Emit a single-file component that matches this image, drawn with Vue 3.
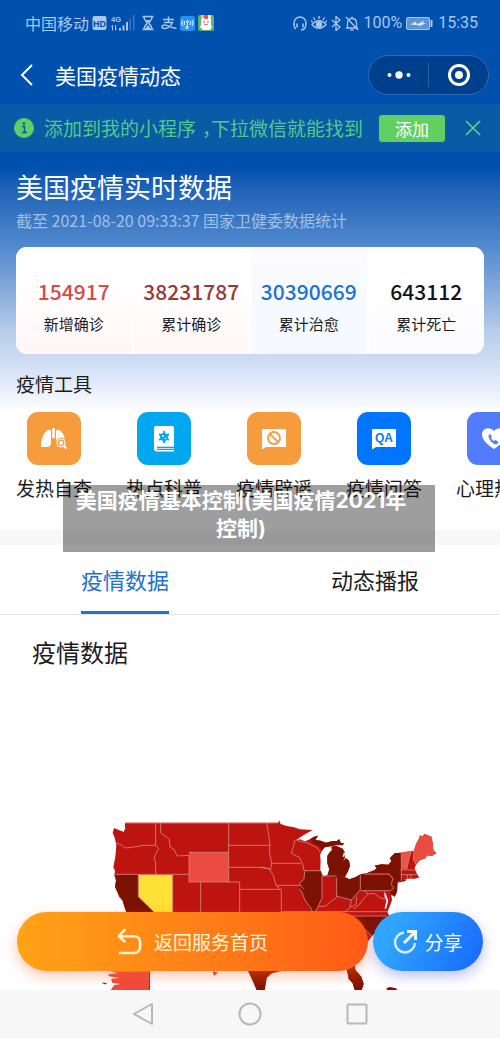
<script setup>
import { ref } from 'vue'

const stats = [
  { value: '154917', label: '新增确诊', tone: 'new' },
  { value: '38231787', label: '累计确诊', tone: 'total' },
  { value: '30390669', label: '累计治愈', tone: 'cured' },
  { value: '643112', label: '累计死亡', tone: 'dead' },
]

const tools = [
  { label: '发热自查', icon: 'lungs', tone: 'orange' },
  { label: '热点科普', icon: 'book', tone: 'sky' },
  { label: '疫情辟谣', icon: 'rumor', tone: 'orange' },
  { label: '疫情问答', icon: 'qa', tone: 'blue' },
  { label: '心理热线', icon: 'heart', tone: 'indigo' },
]

const tabs = ['疫情数据', '动态播报']
const activeTab = ref(0)
const tipOpen = ref(true)
</script>

<template>
  <div class="page">
    <div class="hero">
      <div class="status">
        <div class="status-group">
          <span>中国移动</span>
          <svg class="ic-hd" width="15" height="14" viewBox="0 0 15 14">
            <rect x="0.5" width="14" height="14" rx="2" fill="#a9c6ec" />
            <text x="7.5" y="10.5" text-anchor="middle" font-size="9" font-weight="700" fill="#0450ac">HD</text>
          </svg>
          <svg width="24" height="16" viewBox="0 0 24 16" fill="#a9c6ec">
            <text x="0" y="7" font-size="7.5" font-weight="700">4G</text>
            <path d="M1.5 10l-1.5 2h1v3.5h1V10zM4 10h1v3.500h1l-1.500 2-.5-.5zM8 13h2v2.500H8zM11.500 10.500h2v5h-2zM15 7h2v8.500h-2z" />
            <path d="M18.500 3.500h1.500v12h-1.500zM22 0h1.500v15.500H22z" opacity=".35" />
          </svg>
          <svg class="ic-glass" width="12" height="16" viewBox="0 0 12 16" fill="none" stroke="#a9c6ec" stroke-width="1.500">
            <path d="M0.500 1.500h11M.5 14.500h11M2 2c0 4 3 4 3 6s-3 2-3 6M10 2c0 4-3 4-3 6s3 2 3 6" />
            <path d="M3.500 5h5L6 8zM3 14l3-4 3 4z" fill="#a9c6ec" stroke="none" />
          </svg>
          <svg width="16" height="14" viewBox="0 0 16 14" fill="none" stroke="#a9c6ec" stroke-width="1.500">
            <path d="M2 3.500h11M7.500 0.500V6M3 6.500h8.500C10 10.500 6 12.500 3 12.500c-3 0-2.500-3.500.5-3.500 4 0 6 3 12 3.500" />
          </svg>
          <svg width="15" height="15" viewBox="0 0 15 15" fill="none" stroke="#fff">
            <rect width="15" height="15" rx="3" fill="#2494f4" stroke="none" />
            <path d="M3 4c-1.500 2-1.500 4 0 6M5 5c-1 1.500-1 3 0 4M12 4c1.500 2 1.500 4 0 6M10 5c1 1.500 1 3 0 4M7.500 6v5" />
            <circle cx="7.500" cy="5.500" r="1" /><circle cx="7" cy="11.500" r="1.200" />
          </svg>
          <svg width="16" height="16" viewBox="0 0 16 16">
            <rect width="16" height="16" rx="2" fill="#58b67b" />
            <path d="M3 0h3v5H3z" fill="#f5c34c" /><path d="M6 0h4v4H6z" fill="#e94c4a" /><path d="M10 0h3v5h-3z" fill="#f4e9c9" />
            <path d="M3 5l2-2 2 1h2l2-1 2 2v5l1 2-2 3H5l-3-3 1-2z" fill="#fff" />
            <circle cx="6" cy="7" r=".7" fill="#345" /><circle cx="10" cy="7" r=".7" fill="#345" />
            <path d="M6 9q2 2 4 0" fill="none" stroke="#e55" />
          </svg>
        </div>
        <div class="status-group right">
          <svg width="14" height="15" viewBox="0 0 14 15" fill="none" stroke="#a9c6ec" stroke-width="1.500">
            <path d="M3 12.500H2.500C1.500 12 1 9 1 7a6 6 0 0 1 12 0c0 4-1 7-5 7M4 7.500v4M10 7.500v4" />
          </svg>
          <svg width="16" height="14" viewBox="0 0 16 14" fill="none" stroke="#a9c6ec" stroke-width="1.400">
            <path d="M1 8.500c4-5 10-5 14 0-4 5-10 5-14 0zM8 3V0M4 4L2.500 1.500M12 4l1.500-2.500M1.500 6L0 4.500M14.500 6L16 4.500" />
            <circle cx="8" cy="8.500" r="2.500" fill="#a9c6ec" />
          </svg>
          <svg width="10" height="15" viewBox="0 0 10 15" fill="none" stroke="#a9c6ec" stroke-width="1.300">
            <path d="M1 4l8 7-4 3.500V.5L9 4l-8 7" />
          </svg>
          <svg width="14" height="15" viewBox="0 0 14 15" fill="none" stroke="#a9c6ec" stroke-width="1.300">
            <path d="M1 12h12M2.500 12V7c0-3 2-4.500 4.500-4.500S11.500 4 11.500 7v5M7 2.500V.5M5.500 14h3M1 1l12 13" />
          </svg>
          <span>100%</span>
          <svg class="ic-batt" width="28" height="13" viewBox="0 0 28 13">
            <rect x=".5" y=".5" width="23" height="12" rx="1.500" fill="#5f92d3" stroke="#a9c6ec" />
            <path d="M25.500 3v7" stroke="#a9c6ec" stroke-width="2" />
            <path d="M4 7.500l6-3v2h3l5-3-1 2.500h3l-7 3.500V8H9z" fill="#d9e8fa" />
          </svg>
          <span>15:35</span>
        </div>
      </div>

      <header class="nav">
        <button class="back" type="button" aria-label="返回">
          <svg width="14" height="22" viewBox="0 0 14 22" fill="none" stroke="#fff" stroke-width="2">
            <path d="M12 1L2 11l10 10" />
          </svg>
        </button>
        <h1>美国疫情动态</h1>
        <div class="capsule">
          <button type="button" aria-label="更多">
            <svg width="24" height="8" viewBox="0 0 24 8" fill="#fff">
              <circle cx="2.500" cy="4" r="2" /><circle cx="12" cy="4" r="3.700" /><circle cx="21.500" cy="4" r="2" />
            </svg>
          </button>
          <button type="button" aria-label="关闭">
            <svg width="22" height="22" viewBox="0 0 22 22">
              <circle cx="11" cy="11" r="9.500" fill="none" stroke="#fff" stroke-width="3" />
              <circle cx="11" cy="11" r="4" fill="#fff" />
            </svg>
          </button>
        </div>
      </header>

      <div v-if="tipOpen" class="tip">
        <svg width="20" height="20" viewBox="0 0 20 20">
          <circle cx="10" cy="10" r="10" fill="#5fcf62" />
          <path d="M8 8.500h2.500v6M8 14.500h5" fill="none" stroke="#0858a4" stroke-width="1.500" />
          <circle cx="10" cy="5.500" r="1.200" fill="#0858a4" />
        </svg>
        <p>添加到我的小程序<span class="comma">，</span>下拉微信就能找到</p>
        <button class="add" type="button">添加</button>
        <button class="close" type="button" aria-label="关闭提示" @click="tipOpen = false">
          <svg width="16" height="16" viewBox="0 0 16 16" stroke="#5fcf8a" stroke-width="1.600">
            <path d="M1 1l14 14M15 1L1 15" />
          </svg>
        </button>
      </div>

      <section class="summary">
        <h2>美国疫情实时数据</h2>
        <p class="asof">截至 2021-08-20 09:33:37 国家卫健委数据统计</p>
        <dl class="card">
          <div v-for="s in stats" :key="s.label" class="cell" :class="s.tone">
            <dd>{{ s.value }}</dd>
            <dt>{{ s.label }}</dt>
          </div>
        </dl>
      </section>

      <section class="tools">
        <h3>疫情工具</h3>
        <nav class="tool-row">
          <a v-for="t in tools" :key="t.label" href="#" class="tool">
            <span class="tile" :class="t.tone">
              <svg v-if="t.icon === 'lungs'" width="28" height="24" viewBox="0 0 28 24">
                <path d="M11 4.500v10c0 3.500-1 5.500-4 5.500H2.500C1 20 1 19 1 17.500 1.500 10 5 4 8 3c2-.5 3 0 3 1.500zM16 5c0-2 1-2.500 3-2 3 1 5 5 6 10v7h-5l-4-3z" fill="#fff" />
                <path d="M13.500 1v10" stroke="#fff" stroke-width="2.500" />
                <circle cx="21" cy="16" r="5" fill="#fff" stroke="#f69c3c" stroke-width="1" />
                <circle cx="21" cy="16" r="2.800" fill="#fff" stroke="#f69c3c" stroke-width="1.300" />
                <path d="M24 19l2.500 2.500" stroke="#fff" stroke-width="2" />
              </svg>
              <svg v-else-if="t.icon === 'book'" width="22" height="26" viewBox="0 0 22 26">
                <path d="M3 0h16a2 2 0 0 1 2 2v21H4v1h17v1.500H4a3 3 0 0 1-3-3V2a2 2 0 0 1 2-2z" fill="#fff" />
                <path d="M4 21.500h17" stroke="#02a7f0" stroke-width="1.600" />
                <circle cx="11" cy="11" r="4" fill="#02a7f0" />
                <path d="M11 5v12M6 8l10 6M16 8L6 14" stroke="#02a7f0" stroke-width="1.800" />
                <circle cx="10" cy="10" r="1" fill="#fff" /><circle cx="12.500" cy="12.500" r=".8" fill="#fff" />
              </svg>
              <svg v-else-if="t.icon === 'rumor'" width="26" height="22" viewBox="0 0 26 22">
                <path d="M1 1h24v18H5l-4 2.500z" fill="#fff" />
                <circle cx="13" cy="10" r="6" fill="none" stroke="#f69c3c" stroke-width="1.800" />
                <path d="M9 6l8 8" stroke="#f69c3c" stroke-width="1.800" />
              </svg>
              <svg v-else-if="t.icon === 'qa'" width="26" height="22" viewBox="0 0 26 22">
                <path d="M1 1h24v18H5l-4 2.500z" fill="#fff" />
                <text x="13" y="14" text-anchor="middle" font-size="12" font-weight="700" fill="#0878fc">QA</text>
              </svg>
              <svg v-else width="26" height="24" viewBox="0 0 26 24">
                <path d="M13 22C6 17 1 13 1 7c0-6 8-8 12-3 4-5 12-3 12 3 0 6-5 10-12 15z" fill="#fff" />
                <path d="M9 7c-2 1-2 3 0 6 2 3 5 5 7 4l1.500-2-3-2-1.500 1c-2-1-2.500-2-3-3.500l1-1z" fill="#537cfd" />
              </svg>
            </span>
            <span class="tool-label">{{ t.label }}</span>
          </a>
        </nav>
        <div class="caption">美国疫情基本控制(美国疫情2021年<br>控制)</div>
      </section>
    </div>

    <div class="band"></div>

    <div class="tabs" role="tablist">
      <button
        v-for="(t, i) in tabs"
        :key="t"
        type="button"
        role="tab"
        :aria-selected="i === activeTab"
        :class="{ active: i === activeTab }"
        @click="activeTab = i"
      ><span>{{ t }}</span></button>
    </div>

    <main class="data">
      <h2>疫情数据</h2>
      <svg class="map" viewBox="-270 -384 1500 924" role="img" aria-label="美国各州疫情地图">
        <defs>
          <linearGradient id="south" x1="0" y1="480" x2="0" y2="540" gradientUnits="userSpaceOnUse">
            <stop offset="0" stop-color="#a02008" /><stop offset="1" stop-color="#7c1204" />
          </linearGradient>
        </defs>
        <!-- contiguous states -->
        <path fill="#be1410" d="M105 38H565L567 30L572 42L590 48L612 52L630 58L668 60L640 76L622 88L615 92L630 88L645 94L660 88L672 80L684 77L676 90L692 92L708 98L725 94L740 93L748 88L752 98L762 100L758 106L740 105L722 109L704 112L696 122L690 135L692 150L691 180L699 198L712 196L718 178L712 160L712 138L718 128L726 120L724 110L738 107L758 116L765 128L764 144L758 154L768 145L777 152L780 168L774 184L765 200L778 208L796 202L812 193L830 190L854 180L860 174L854 167L874 163L895 164L904 154L900 144L914 130L934 128L972 122L978 102L987 86L990 76L996 80L1004 72L1024 80L1028 98L1030 120L1039 130L1025 138L1012 136L1004 146L990 150L978 164L974 174L978 186L986 200L990 202L974 206L950 206L924 217L922 230L921 245L914 260L904 255L906 270L902 282L892 306L898 318L878 346L858 366L846 378L830 400L792 430L796 480L814 500L821 522L815 540H794L788 520L776 507L777 495L772 480L720 460L640 476L571 484L545 490L530 503L524 540H500L490 516L474 483L420 440L340 440L240 425L180 390L130 340L108 304L103 290L98 272L87 260L82 246L75 230L78 212L73 196L75 182L70 172L76 140L79 106L75 86L68 68L72 54L92 62L102 66L104 54Z" />
        <path fill="#7c1204" d="M76 194H145V260L192 306L220 340H130L108 304L98 272L82 246L75 230L78 212Z" />
        <path fill="#ffe034" d="M145 194H248V340H220L192 306L145 260Z" />
        <path fill="#ea4c42" d="M297 127H416V216H297Z" />
        <g fill="#7c1204">
          <path d="M644 184H692L696 200V264L684 290L676 304L668 304L660 290L648 274L640 262L636 246L628 236L630 220L642 208Z" />
          <path d="M740 203L768 204L778 208L796 202L811 193V238L800 252L784 270L768 266L748 262L740 258Z" />
          <path d="M712 198L718 178L712 160L712 138L718 128L726 120L724 110L738 107L758 116L765 128L764 144L758 154L768 145L777 152L780 168L774 184L765 200L740 203Z" />
          <path d="M660 88L672 80L684 77L676 90L692 92L708 98L725 94L740 93L748 88L752 98L762 100L758 106L740 105L722 109L704 112L696 122L690 112L672 102Z" />
          <path d="M811 193L830 190L854 180L860 174L854 167L874 163L895 164L904 154L900 144L914 130L932 128L934 180L932 214L918 212L912 204L898 192L822 192L822 197L811 197Z" />
          <path d="M811 195H896L908 206L904 224L912 234L902 242H811Z" />
          <path d="M908 206L920 212L922 230L921 245L914 260L900 246L912 234L904 224Z" />
          <path d="M922 218L936 210L952 208L944 214Z" />
          <path d="M782 318H890L878 346L858 366L846 378L824 358L800 338Z" />
        </g>
        <path fill="#e8574c" d="M934 127L965 122L958 142L950 178H936L934 150Z" />
        <path fill="#ea4c42" d="M972 122L978 102L987 86L990 76L996 80L1004 72L1024 80L1028 98L1030 120L1039 130L1025 138L1012 136L1004 146L990 150L978 164L970 148Z" />
        <g fill="url(#south)">
          <path d="M474 480H574L545 490L530 503L524 540H500L490 516Z" />
          <path d="M768 470H794L796 480L814 500L821 522L815 540H794L788 520L776 507Z" />
          <path d="M890 534L900 531L918 535L922 540H890Z" />
        </g>
        <!-- bays and inlets -->
        <path fill="none" stroke="#fff" stroke-width="5" d="M884 250l8 22-6 24M98 44l6 14M764 128l-4 12" />
        <!-- state borders -->
        <g fill="none" stroke="#cf8582" stroke-width="2.500">
          <path d="M105 39H563M79 99L94 104L104 114L126 112L158 106H197V39M197 106L206 116L196 134L192 148L197 156V193M76 193H297M212 39V68L238 88L240 112L250 116L262 138L297 136V216M297 127H416V39M416 127V216M416 106H540M416 172H518L544 178M297 216H449V306M332 216V306M449 238H574M248 194V306M145 194V260L192 306M530 39L536 74L540 106L538 124L545 160M545 160H632M510 172L538 176L550 196L558 226L574 240V306M558 226H632L642 238M615 90L610 110L604 130L628 142L638 162L642 182M545 160L542 176M642 182H692M632 226L628 220L642 208L644 184M622 92L650 98L680 112L690 126M696 198V264L684 290L676 306M696 198H740M740 203V262L724 274L708 288L684 290M740 258L768 266L784 270L800 252L811 238V193M784 270L780 292L764 306M800 260L798 284L780 292M811 242H902M574 305H892M782 318H890M822 242L834 252L818 270L804 288L790 296M834 252L852 250L868 262L890 270M822 192H898L908 206L904 224L912 234L902 242M934 127V214M965 122L958 142L950 178M932 180H980M932 194H980M972 122L970 148L978 164M952 194V206M962 194V206M884 242V264M650 278L642 264L636 246L628 236M668 306L660 290L650 278M782 318L800 338L824 358L846 378" />
        </g>
        <!-- Alaska and Hawaii -->
        <path fill="#ee4b3c" d="M60 484H180V540H62L72 526L90 522L66 518L64 506L88 504L54 498L58 492L84 490Z" />
        <path fill="#6b2b28" d="M34 518h12l6 4-8 1zM178 484h2v56h-2z" />
        <path fill="#dc3a2c" d="M368 484L384 488L376 494L372 498Z" />
      </svg>
      <div class="actions">
        <button class="home" type="button">
          <svg width="25" height="27" viewBox="0 0 26 28" fill="none" stroke="#fff3d6" stroke-width="2.600" stroke-linejoin="round" stroke-linecap="round">
            <path d="M8 2L2 8.500L8 14M2 8.500H18A6 6 0 0 1 24 14.500V20A6 6 0 0 1 18 26H3" />
          </svg>
          返回服务首页
        </button>
        <button class="share" type="button">
          <svg width="24" height="24" viewBox="0 0 24 24" fill="none" stroke="#eef8ff" stroke-width="2.400">
            <path d="M11 2.500A10 10 0 1 0 22 13" opacity=".9" />
            <path d="M11 13L22 2M14 1.500h8.500V10" stroke-width="3" />
          </svg>
          分享
        </button>
      </div>
    </main>

    <footer class="sysnav">
      <button type="button" aria-label="返回键">
        <svg width="22" height="24" viewBox="0 0 22 24"><path d="M20 2v20L2 12z" /></svg>
      </button>
      <button type="button" aria-label="主屏幕">
        <svg width="24" height="24" viewBox="0 0 24 24"><circle cx="12" cy="12" r="10.500" /></svg>
      </button>
      <button type="button" aria-label="最近任务">
        <svg width="22" height="22" viewBox="0 0 22 22"><rect x="1.500" y="1.500" width="19" height="19" rx="1" /></svg>
      </button>
    </footer>
  </div>
</template>

<style>
body {
  margin: 0;
}
</style>

<style scoped>
.page {
  display: flex;
  flex-direction: column;
  min-height: 100vh;
  overflow: hidden;
  background: #fff;
  color: #1c1c1e;
  font-family: "Noto Sans CJK SC", "Noto Sans", sans-serif;
}
h1, h2, h3, p, dl, dd, dt {
  margin: 0;
  font-weight: 400;
}
button {
  margin: 0;
  padding: 0;
  border: 0;
  background: none;
  color: inherit;
  font: inherit;
}
a {
  color: inherit;
  text-decoration: none;
}
svg {
  display: block;
  flex: none;
}
svg text {
  font-family: "Liberation Sans", sans-serif;
}
.hero {
  background: linear-gradient(#0050ad 0, #0050ad 168px, #2063b8 190px, #5189cd 245px, #85aadc 290px, #bacfeb 335px, #d6e2f6 370px, #edf2fc 394px, #fff 412px);
}
.status {
  display: flex;
  justify-content: space-between;
  align-items: center;
  height: 46px;
  padding: 0 22px 0 25px;
  color: #a9c6ec;
  font-size: 16px;
  line-height: 22px;
}
.status-group {
  display: flex;
  align-items: center;
  gap: 3px;
}
.status-group.right {
  gap: 4px;
  font-family: Roboto, sans-serif;
}
.ic-hd {
  margin-right: 1px;
}
.ic-glass {
  margin: 0 4px;
}
.nav {
  display: flex;
  align-items: center;
  height: 58px;
  padding: 0 11px 0 20px;
  color: #fff;
}
.back {
  width: 35px;
}
h1 {
  flex: 1;
  font-size: 21px;
  line-height: 32px;
}
.capsule {
  display: flex;
  align-items: center;
  box-sizing: border-box;
  width: 121px;
  height: 40px;
  border: 1px solid #2f68b4;
  border-radius: 20px;
  background: #003f8b;
}
.capsule button {
  flex: 1;
  display: flex;
  justify-content: center;
  align-items: center;
  height: 24px;
}
.capsule button + button {
  border-left: 1px solid #2f5f9f;
}
.tip {
  display: flex;
  align-items: center;
  height: 48px;
  padding: 0 19px 0 14px;
  background: #085ba4;
  color: #55c98c;
}
.tip p {
  flex: 1;
  margin-left: 10px;
  font-size: 19px;
  line-height: 28px;
  white-space: nowrap;
}
.comma {
  display: inline-block;
  width: 9px;
  padding-left: 6px;
}
.add {
  width: 66px;
  height: 27px;
  margin-right: 20px;
  border-radius: 3px;
  background: #62cf63;
  color: #fff;
  font-size: 17px;
  line-height: 27px;
}
.summary {
  padding: 15px 16px 0;
}
.summary h2 {
  color: #fff;
  font-size: 27px;
  line-height: 40px;
}
.asof {
  color: #a0c0e8;
  font-size: 16px;
  line-height: 26px;
}
.card {
  display: flex;
  gap: 2px;
  margin-top: 14px;
  border-radius: 11px;
  overflow: hidden;
  background: #fff;
}
.cell {
  flex: 1;
  display: flex;
  flex-direction: column;
  height: 107px;
  box-sizing: border-box;
  padding-top: 27px;
  text-align: center;
}
.cell dd {
  font-size: 21px;
  font-weight: 500;
  line-height: 34px;
}
.cell dt {
  margin-top: 4px;
  font-size: 15px;
  line-height: 24px;
}
.new {
  background: linear-gradient(#fff 30%, #fff6f6);
}
.new dd {
  color: #d94a4a;
}
.total {
  background: linear-gradient(#fff 30%, #fff6f7);
}
.total dd {
  color: #993838;
}
.cured {
  background: linear-gradient(#fefbff, #f6fafe 40%);
}
.cured dd {
  color: #1c74d0;
}
.dead {
  background: linear-gradient(#fff 30%, #fbfafe);
}
.dead dd {
  color: #121316;
}
.tools {
  position: relative;
  padding: 15px 0 27px 16px;
}
.tools h3 {
  font-size: 19px;
  line-height: 30px;
}
.tool-row {
  display: flex;
  gap: 34px;
  margin-top: 13px;
  overflow: hidden;
}
.tool {
  flex: none;
  display: flex;
  flex-direction: column;
  align-items: center;
  width: 76px;
}
.tile {
  display: flex;
  justify-content: center;
  align-items: center;
  width: 54px;
  height: 53px;
  border-radius: 11px;
}
.orange {
  background: #f69c3c;
}
.sky {
  background: #02a7f0;
}
.blue {
  background: #0076ff;
}
.indigo {
  background: #537cfd;
}
.tool-label {
  margin-top: 8px;
  font-size: 19px;
  line-height: 30px;
  white-space: nowrap;
}
.caption {
  position: absolute;
  left: 63px;
  right: 65px;
  top: 131px;
  box-sizing: border-box;
  height: 67px;
  padding: 2px 16px 0 0;
  background: rgba(0, 0, 0, 0.38);
  color: #fff;
  font-family: Inter, "Noto Sans CJK SC", sans-serif;
  font-size: 21px;
  font-weight: 700;
  line-height: 28px;
  text-align: center;
}
.band {
  height: 15px;
  background: #f7f7f7;
}
.tabs {
  display: flex;
  height: 69px;
  border-bottom: 1px solid #e6e6e6;
}
.tabs button {
  flex: 1;
  display: flex;
  justify-content: center;
  font-size: 22px;
}
.tabs span {
  box-sizing: border-box;
  height: 69px;
  padding-top: 18px;
  line-height: 32px;
}
.tabs .active span {
  border-bottom: 3px solid #2272cc;
  color: #2272cc;
}
.data {
  position: relative;
  flex: 1;
}
.data h2 {
  padding: 19px 32px 12px;
  font-size: 24px;
  line-height: 36px;
}
.map {
  width: 100%;
  height: auto;
}
.actions {
  position: absolute;
  left: 17px;
  right: 17px;
  bottom: 19px;
  display: flex;
  gap: 5px;
}
.actions button {
  display: flex;
  justify-content: center;
  align-items: center;
  height: 59px;
  border-radius: 30px;
  font-size: 19px;
}
.home {
  flex: 1;
  gap: 12px;
  background: linear-gradient(90deg, #ffa316, #ff7d18 55%, #ff5a16);
  box-shadow: 0 5px 14px rgba(255, 90, 30, 0.35);
  color: #fff6dc;
}
.share {
  width: 110px;
  gap: 7px;
  background: linear-gradient(115deg, #30a4ff 20%, #1668fc);
  box-shadow: 0 5px 14px rgba(60, 70, 200, 0.35);
  color: #f0faff;
}
.sysnav {
  position: relative;
  display: flex;
  justify-content: center;
  align-items: center;
  gap: 84px;
  height: 48px;
  background: #f7f7f7;
}
.sysnav svg {
  fill: none;
  stroke: #b8b8b8;
  stroke-width: 2;
  stroke-linejoin: round;
}
</style>
